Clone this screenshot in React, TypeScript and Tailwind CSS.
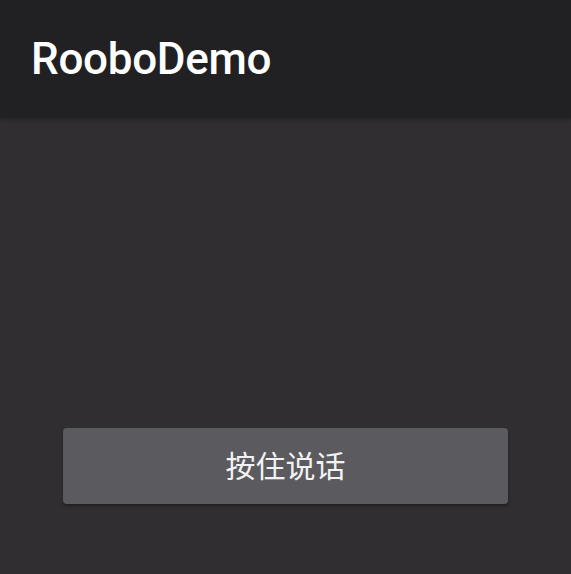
export default function App() {
  return (
    <div className="w-[571px] h-[574px] flex flex-col bg-[#302e31]" style={{ fontFamily: "Roboto, 'Noto Sans CJK SC', sans-serif" }}>
      <header className="h-[118px] shrink-0 bg-[#212023] flex items-center pl-[31px] shadow-[0_2px_4px_rgba(0,0,0,0.25)]">
        <h1 className="text-[44px] font-medium text-white leading-none tracking-[-0.3px]">RooboDemo</h1>
      </header>
      <main className="flex-1 flex flex-col">
        <div className="h-[310px]" />
        <div className="px-[63px]">
          <button className="w-full h-[76px] rounded-[4px] bg-[#5b5a5e] text-[30px] text-[#f2f2f2] shadow-[0_2px_3px_rgba(0,0,0,0.35)] flex items-center justify-center">
            按住说话
          </button>
        </div>
      </main>
    </div>
  );
}
